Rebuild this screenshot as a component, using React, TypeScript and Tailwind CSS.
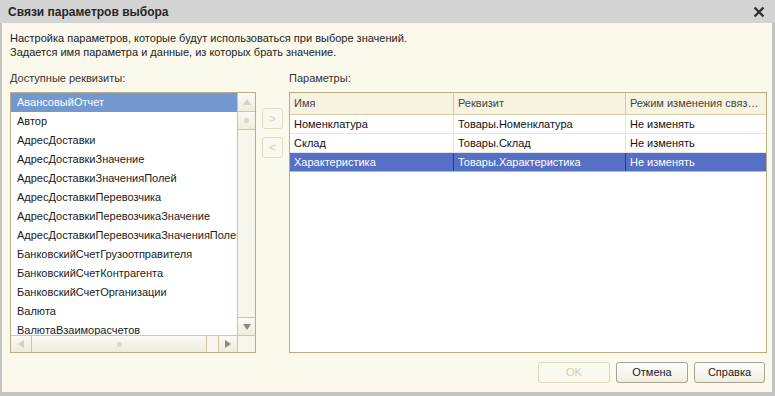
import React from "react";

const fields = [
  "АвансовыйОтчет",
  "Автор",
  "АдресДоставки",
  "АдресДоставкиЗначение",
  "АдресДоставкиЗначенияПолей",
  "АдресДоставкиПеревозчика",
  "АдресДоставкиПеревозчикаЗначение",
  "АдресДоставкиПеревозчикаЗначенияПолей",
  "БанковскийСчетГрузоотправителя",
  "БанковскийСчетКонтрагента",
  "БанковскийСчетОрганизации",
  "Валюта",
  "ВалютаВзаиморасчетов",
];

const params = [
  { name: "Номенклатура", attr: "Товары.Номенклатура", mode: "Не изменять" },
  { name: "Склад", attr: "Товары.Склад", mode: "Не изменять" },
  { name: "Характеристика", attr: "Товары.Характеристика", mode: "Не изменять" },
];

const Arrow = ({ dir }: { dir: "up" | "down" | "left" | "right" }) => {
  const pts = {
    up: "1,7 5,1 9,7",
    down: "1,1 5,7 9,1",
    left: "7,1 1,5 7,9",
    right: "1,1 7,5 1,9",
  }[dir];
  const size = dir === "up" || dir === "down" ? { w: 10, h: 8 } : { w: 8, h: 10 };
  return (
    <svg width={size.w} height={size.h} viewBox={`0 0 ${size.w} ${size.h}`}>
      <polygon points={pts} fill={dir === "down" || dir === "right" ? "#8a8a8a" : "#d2d0c6"} />
    </svg>
  );
};

const Grip = () => <div className="w-[5px] h-[5px] rounded-full bg-[#d8d6cc]" />;

const App = () => {
  return (
    <div
      className="w-[775px] h-[396px] bg-[#c4c4c4] flex flex-col overflow-hidden text-[11px] text-[#1a1a1a]"
      style={{ fontFamily: "'Liberation Sans', Arial, sans-serif" }}
    >
      {/* title */}
      <div className="h-[23px] shrink-0 flex items-center justify-between pl-[8px] pr-[10px] bg-[#d3d3d3]">
        <span className="text-[12px] font-bold text-[#262626]">Связи параметров выбора</span>
        <svg width="12" height="12" viewBox="0 0 12 12">
          <path d="M1.5 1.5 L10.5 10.5 M10.5 1.5 L1.5 10.5" stroke="#333" strokeWidth="2.4" />
        </svg>
      </div>

      <div className="flex-1 ml-[2px] mr-[3px] mb-[4px] bg-[#fbf9ec] flex flex-col pl-[8px]">
        <div className="pt-[8px] leading-[14px] text-[#222]">
          <div>Настройка параметров, которые будут использоваться при выборе значений.</div>
          <div>Задается имя параметра и данные, из которых брать значение.</div>
        </div>

        <div className="flex mt-[12px] h-[14px] leading-[14px] text-[#333]">
          <div className="w-[279px]">Доступные реквизиты:</div>
          <div>Параметры:</div>
        </div>

        <div className="flex mt-[7px] h-[261px]">
          {/* left list */}
          <div className="w-[246px] h-full border border-[#b8ad86] bg-white flex flex-col">
            <div className="flex flex-1 min-h-0">
              <div className="flex-1 overflow-hidden">
                {fields.map((f, i) => (
                  <div
                    key={f}
                    className={`h-[19px] leading-[19px] pl-[6px] whitespace-nowrap ${
                      i === 0 ? "bg-[#7198cf] text-white" : "text-[#1a1a1a]"
                    }`}
                  >
                    {f}
                  </div>
                ))}
              </div>
              <div className="w-[18px] border-l border-[#cdc6a8] bg-[#f8f6ec] flex flex-col">
                <div className="h-[19px] flex items-center justify-center border-b border-[#cdc6a8] bg-gradient-to-b from-[#fbfaf3] to-[#efecdc]">
                  <Arrow dir="up" />
                </div>
                <div className="h-[18px] flex items-center justify-center border-b border-[#cdc6a8] bg-gradient-to-b from-[#fbfaf3] to-[#efecdc]">
                  <Grip />
                </div>
                <div className="flex-1" />
                <div className="h-[18px] flex items-center justify-center border-t border-[#cdc6a8] bg-gradient-to-b from-[#fbfaf3] to-[#efecdc]">
                  <Arrow dir="down" />
                </div>
              </div>
            </div>
            <div className="h-[17px] border-t border-[#cdc6a8] flex bg-[#f8f6ec]">
              <div className="w-[21px] flex items-center justify-center border-r border-[#cdc6a8] bg-gradient-to-b from-[#fbfaf3] to-[#efecdc]">
                <Arrow dir="left" />
              </div>
              <div className="w-[175px] flex items-center justify-center border-r border-[#cdc6a8] bg-gradient-to-b from-[#fbfaf3] to-[#efecdc]">
                <Grip />
              </div>
              <div className="flex-1" />
              <div className="w-[19px] flex items-center justify-center border-l border-[#cdc6a8] bg-gradient-to-b from-[#fbfaf3] to-[#efecdc]">
                <Arrow dir="right" />
              </div>
              <div className="w-[18px] border-l border-[#cdc6a8] bg-[#f8f6ec]" />
            </div>
          </div>

          {/* move buttons */}
          <div className="w-[33px] flex flex-col items-center pt-[16px] gap-[8px]">
            <div className="w-[21px] h-[21px] rounded-[3px] border border-[#e2dcc2] bg-[#fbf9ee] flex items-center justify-center text-[#d9cfae] text-[12px]">
              &gt;
            </div>
            <div className="w-[21px] h-[21px] rounded-[3px] border border-[#e2dcc2] bg-[#fbf9ee] flex items-center justify-center text-[#d9cfae] text-[12px]">
              &lt;
            </div>
          </div>

          {/* right table */}
          <div className="w-[478px] h-full border border-[#b8ad86] bg-white flex flex-col">
            <div className="h-[22px] flex bg-[#f7f3e1] border-b border-[#d3c9a3] text-[#444]">
              <div className="w-[164px] pl-[4px] leading-[21px] border-r border-[#d3c9a3]">Имя</div>
              <div className="w-[172px] pl-[4px] leading-[21px] border-r border-[#d3c9a3]">Реквизит</div>
              <div className="flex-1 pl-[4px] pr-[4px] leading-[21px] whitespace-nowrap overflow-hidden text-ellipsis">
                Режим изменения связи параметра
              </div>
            </div>
            {params.map((p, i) => {
              const sel = i === 2;
              return (
                <div
                  key={p.name}
                  className={`h-[19px] flex leading-[18px] border-b ${
                    sel ? "bg-[#5570c5] text-white border-[#a9b8e0]" : "text-[#111] border-[#e6e6e6]"
                  }`}
                >
                  <div className={`w-[164px] pl-[4px] border-r ${sel ? "border-[#2c3c74]" : "border-[#e6e6e6]"}`}>{p.name}</div>
                  <div className={`w-[172px] pl-[4px] border-r ${sel ? "border-[#2c3c74]" : "border-[#e6e6e6]"}`}>{p.attr}</div>
                  <div className="flex-1 pl-[4px]">{p.mode}</div>
                </div>
              );
            })}
          </div>
        </div>

        {/* bottom buttons */}
        <div className="flex justify-end gap-[6px] mt-[9px] mr-[7px]">
          <div className="w-[72px] h-[21px] rounded-[3px] border border-[#e0d9bf] bg-[#fbf9ee] flex items-center justify-center text-[#d6cca8]">
            OK
          </div>
          <div className="w-[72px] h-[21px] rounded-[3px] border border-[#a8a392] bg-gradient-to-b from-white to-[#efecdf] flex items-center justify-center text-[#222]">
            Отмена
          </div>
          <div className="w-[71px] h-[21px] rounded-[3px] border border-[#a8a392] bg-gradient-to-b from-white to-[#efecdf] flex items-center justify-center text-[#222]">
            Справка
          </div>
        </div>
      </div>
    </div>
  );
};

export default App;
